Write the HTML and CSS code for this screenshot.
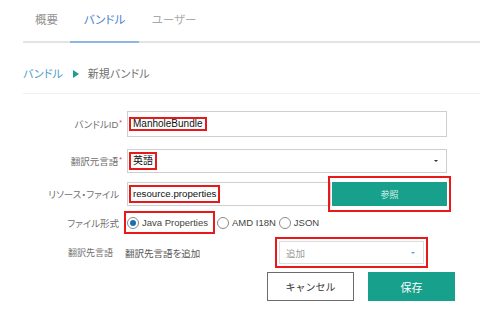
FILE: index.html
```html
<!DOCTYPE html>
<html lang="ja">
<head>
    <meta charset="UTF-8">
    <meta name="viewport" content="width=device-width, initial-scale=1.0">
    <title>新規バンドル</title>
    <link rel="stylesheet" href="styles.css">
</head>
<body>
    <div class="tabs">
        <div class="tab tab-first">概要</div>
        <div class="tab active">バンドル</div>
        <div class="tab">ユーザー</div>
    </div>

    <div class="crumbs">
        <span class="crumb-link">バンドル</span>
        <span class="crumb-arrow"></span>
        <span class="crumb-current">新規バンドル</span>
    </div>

    <div class="form">
        <div class="row row-id">
            <div class="label">バンドルID<span class="req">*</span></div>
            <div class="field">
                <div class="input input-id"><span class="mark mark-text">ManholeBundle</span></div>
            </div>
        </div>

        <div class="row row-lang">
            <div class="label">翻訳元言語<span class="req">*</span></div>
            <div class="field">
                <div class="input select"><span class="mark mark-text">英語</span><span class="caret"></span></div>
            </div>
        </div>

        <div class="row row-file">
            <div class="label no-req">リソース・ファイル</div>
            <div class="field field-file">
                <div class="input input-file"><span class="mark mark-text">resource.properties</span></div>
                <div class="mark mark-browse">
                    <button class="btn btn-primary btn-browse">参照</button>
                </div>
            </div>
        </div>

        <div class="row row-format">
            <div class="label no-req">ファイル形式</div>
            <div class="field field-radios">
                <div class="mark mark-radio">
                    <span class="radio checked"></span><span class="radio-text">Java Properties</span>
                </div>
                <span class="radio"></span><span class="radio-text">AMD I18N</span>
                <span class="radio"></span><span class="radio-text">JSON</span>
            </div>
        </div>

        <div class="row row-target">
            <div class="label label-target">翻訳先言語</div>
            <div class="field field-target">
                <span class="target-text">翻訳先言語を追加</span>
                <div class="mark mark-add">
                    <div class="input select select-add">追加<span class="caret caret-blue"></span></div>
                </div>
            </div>
        </div>

        <div class="row row-actions">
            <button class="btn btn-cancel">キャンセル</button>
            <button class="btn btn-primary btn-save">保存</button>
        </div>
    </div>
</body>
</html>
```

FILE: styles.css
```css
body {
    margin: 0;
    background-color: #fff;
    color: #333;
    font-family: "Liberation Sans", "Noto Sans CJK JP", sans-serif;
    font-feature-settings: "palt";
}

/* Tabs */
.tabs {
    display: flex;
    margin-left: 23px;
    height: 41px;
    border-bottom: 2px solid #e3e3e3;
}
.tab {
    width: 70px;
    line-height: 41px;
    font-size: 11.5px;
    color: #939393;
    text-align: center;
}
.tab-first {
    width: 47px;
}
.tab.active {
    width: 69px;
    color: #4a84cc;
    border-bottom: 2px solid #8db5e6;
    margin-bottom: -2px;
}
.tab:last-child {
    color: #ababab;
}

/* Breadcrumb */
.crumbs {
    display: flex;
    align-items: center;
    margin-left: 23px;
    padding: 22px 0 10px;
    line-height: 18px;
    font-size: 11px;
    border-bottom: 1px solid #efefef;
}
.crumb-link {
    color: #4b9cc8;
}
.crumb-arrow {
    width: 0;
    height: 0;
    margin: 0 9px 0 10px;
    border-left: 6px solid #17a08c;
    border-top: 4.5px solid transparent;
    border-bottom: 4.5px solid transparent;
}
.crumb-current {
    color: #707070;
}

/* Form */
.row {
    display: flex;
    align-items: center;
}
.label {
    width: 122px;
    flex-shrink: 0;
    text-align: right;
    font-size: 9.5px;
    color: #707070;
}
.label.no-req {
    width: 119px;
    padding-right: 3px;
}
.req {
    color: #e03a3a;
    font-size: 7px;
    vertical-align: 3px;
    margin-left: 1px;
}
.field {
    margin-left: 5px;
    display: flex;
    align-items: center;
}
.input {
    box-sizing: border-box;
    width: 320px;
    display: flex;
    align-items: center;
    padding-left: 1px;
    border: 1px solid #cfcfcf;
    background-color: #fff;
    font-size: 10px;
    color: #111;
}
.mark {
    border: 2px solid #e8191b;
}
.mark-text {
    padding: 1px 2px;
    line-height: 12px;
}

.row-id {
    margin-top: 17px;
    height: 26px;
}
.input-id {
    height: 26px;
}
.input-id .mark-text {
    line-height: 10px;
    padding: 0 2px;
}

.row-lang {
    margin-top: 12px;
    height: 24px;
}
.select {
    height: 24px;
    position: relative;
}
.caret {
    position: absolute;
    right: 8px;
    top: 10px;
    width: 0;
    height: 0;
    border-top: 2px solid #333;
    border-left: 2px solid transparent;
    border-right: 2px solid transparent;
}

.row-file {
    margin-top: 4px;
    height: 34px;
}
.input-file {
    width: 204px;
    height: 24px;
}
.input-file .mark-text {
    font-size: 9.7px;
}
.mark-browse {
    margin-left: -3px;
    padding: 4px 2px;
}
.btn {
    box-sizing: border-box;
    font-family: inherit;
    font-size: 10px;
    cursor: pointer;
}
.btn-primary {
    background-color: #17a08c;
    color: #fff;
    border: none;
}
.btn-browse {
    display: block;
    width: 115px;
    height: 24px;
    font-size: 9px;
    color: #dff3ef;
}

.row-format {
    height: 23px;
}
.field-radios {
    font-size: 9.5px;
    color: #444;
}
.mark-radio {
    display: flex;
    align-items: center;
    margin-left: -3px;
    padding: 3px 4px 3px 1px;
    line-height: 13px;
}
.radio {
    box-sizing: border-box;
    width: 12px;
    height: 12px;
    border: 1px solid #8a8a8a;
    border-radius: 50%;
    margin: 0 3px 0 2px;
    display: flex;
    align-items: center;
    justify-content: center;
}
.mark-radio .radio {
    margin-left: 0;
}
.radio.checked::after {
    content: "";
    width: 6px;
    height: 6px;
    border-radius: 50%;
    background-color: #1b6fb3;
}
.radio-text {
    margin-right: 1px;
}

.row-target {
    margin-top: 3px;
    height: 31px;
}
.label-target {
    width: 113px;
    padding-right: 9px;
    font-size: 9px;
}
.field-target {
    margin-left: 3px;
}
.target-text {
    width: 150px;
    font-size: 9.5px;
    color: #555;
}
.mark-add {
    padding: 2px;
}
.select-add {
    width: 145px;
    height: 23px;
    padding-left: 6px;
    border-color: #dedede;
    color: #9a9a9a;
    font-size: 9.5px;
}
.caret-blue {
    right: 8px;
    border-top-color: #6d9fd8;
}

.row-actions {
    margin-top: 4px;
    padding-left: 267px;
}
.btn-cancel {
    width: 87px;
    height: 29px;
    background-color: #fff;
    border: 1px solid #6b6b6b;
    color: #333;
}
.btn-save {
    width: 87px;
    height: 29px;
    margin-left: 14px;
    font-size: 11px;
}
```
